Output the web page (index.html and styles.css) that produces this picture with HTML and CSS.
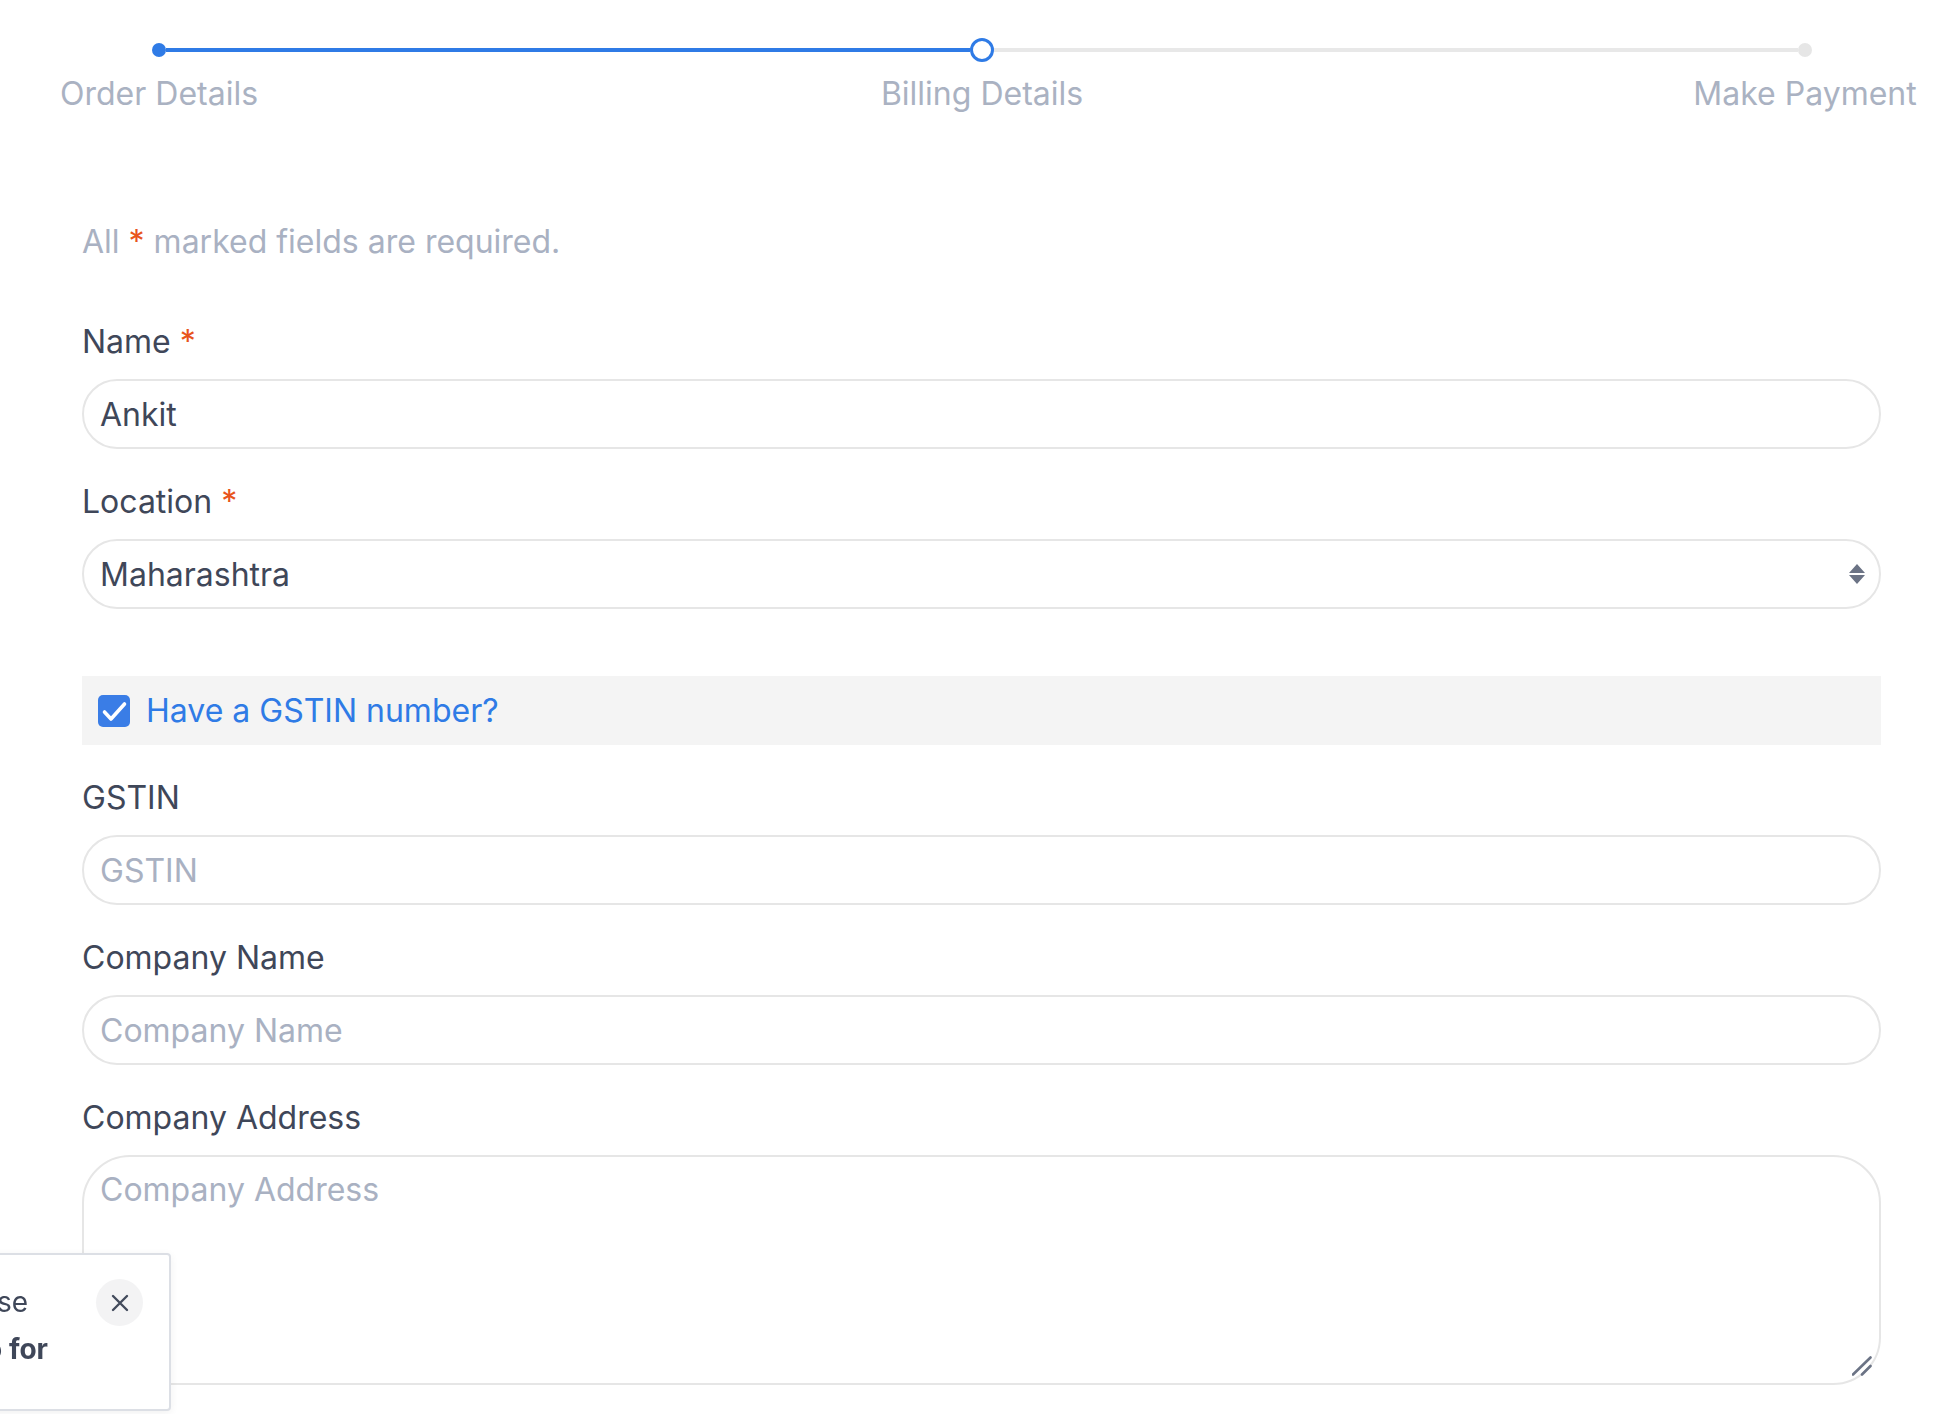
FILE: index.html
```html
<!DOCTYPE html>
<html lang="en">
<head>
  <meta charset="UTF-8" />
  <meta name="viewport" content="width=device-width, initial-scale=1.0"/>
  <title>Checkout – Billing Details</title>
  <link rel="stylesheet" href="styles.css">
</head>
<body>
  <div class="checkout">
    <!-- STEPPER -->
    <div class="stepper">
      <div class="track">
        <span class="dot dot-done"></span>
        <span class="bar bar-done"></span>
        <span class="ring"></span>
        <span class="bar"></span>
        <span class="dot"></span>
      </div>
      <div class="step-labels">
        <span class="step-label">Order Details</span>
        <span class="step-label">Billing Details</span>
        <span class="step-label">Make Payment</span>
      </div>
    </div>

    <!-- BILLING FORM -->
    <form class="billing" id="billingForm">
      <p class="note">All <span class="req">*</span> marked fields are required.</p>

      <div class="field">
        <label for="name">Name <span class="req">*</span></label>
        <input type="text" id="name" value="Ankit" />
      </div>

      <div class="field">
        <label for="location">Location <span class="req">*</span></label>
        <div class="select-wrap">
          <select id="location">
            <option>Maharashtra</option>
            <option>Karnataka</option>
            <option>Gujarat</option>
            <option>Delhi</option>
          </select>
          <svg class="select-arrow" width="16" height="20" viewBox="0 0 16 20">
            <path d="M8 0 L16 9 H0 Z M0 11 H16 L8 20 Z" fill="#6b7385"/>
          </svg>
        </div>
      </div>

      <label class="gst-toggle">
        <span class="check-box">
          <svg width="32" height="32" viewBox="0 0 32 32">
            <path d="M6.5 17 L13 24 L26.5 9" fill="none" stroke="#fff" stroke-width="3.6" stroke-linecap="round" stroke-linejoin="round"/>
          </svg>
        </span>
        Have a GSTIN number?
      </label>

      <div class="field">
        <label for="gstin">GSTIN</label>
        <input type="text" id="gstin" placeholder="GSTIN" />
      </div>

      <div class="field">
        <label for="companyName">Company Name</label>
        <input type="text" id="companyName" placeholder="Company Name" />
      </div>

      <div class="field">
        <label for="companyAddress">Company Address</label>
        <div class="textarea-wrap">
          <textarea id="companyAddress" placeholder="Company Address"></textarea>
          <svg class="grip" width="20" height="20" viewBox="0 0 20 20">
            <path d="M1 18.5 L18.5 1.5 M10 18.5 L18.5 10" stroke="#6b7385" stroke-width="2.6" stroke-linecap="round"/>
          </svg>
        </div>
      </div>
    </form>
  </div>

  <!-- TOAST -->
  <div class="toast">
    <p class="toast-text">
      <span class="toast-line">Sign in to use</span>
      <strong class="toast-line">Upgrade to Pro for</strong>
    </p>
    <button class="toast-close" type="button" aria-label="Close">
      <svg width="18" height="18" viewBox="0 0 18 18">
        <path d="M2 2 L16 16 M16 2 L2 16" stroke="#434b5c" stroke-width="2.4" stroke-linecap="round"/>
      </svg>
    </button>
  </div>
</body>
</html>
```

FILE: styles.css
```css
/* Reset & fonts */
* { margin:0; padding:0; box-sizing:border-box }
body { font-family:Inter,"Noto Sans",sans-serif; background:#fff; color:#3f4759; }

.checkout { padding:38px 63px 40px 82px; }

/* Stepper */
.stepper { margin-left:-82px; margin-right:-63px; }
.track {
  display:flex; align-items:center; height:24px;
  margin-left:152px; width:1660px;
}
.dot { width:14px; height:14px; border-radius:50%; background:#e6e6e6; flex:none; }
.dot-done { background:#2f7be6; }
.bar { flex:1; height:4px; background:#e8e8e8; }
.bar-done { background:#2f7be6; }
.ring {
  width:24px; height:24px; border-radius:50%; flex:none;
  border:3px solid #2f7be6; background:#fff;
}
.step-labels {
  display:flex; justify-content:space-between;
  margin:12px 0 0 159px; width:1646px;
}
.step-label {
  width:0; display:flex; justify-content:center; white-space:nowrap;
  font-size:32px; line-height:40px; color:#aab2c2;
}

/* Form */
.billing { margin-top:104px; }
.note { font-size:32px; line-height:48px; color:#a9b1c2; margin-bottom:52px; }
.req { color:#e8541c; }

.field { margin-bottom:29px; }
.field label { display:block; font-size:32px; line-height:48px; margin-bottom:13px; color:#3f4759; }
.field input,
.field select,
.field textarea {
  width:100%; height:70px; padding:0 16px;
  border:2px solid #e6e6e6; border-radius:48px;
  font-family:inherit; font-size:32px; color:#3f4759; background:#fff;
  outline:none;
}
.field input::placeholder,
.field textarea::placeholder { color:#a9b1c2; }

.select-wrap { position:relative; }
.field select { appearance:none; -webkit-appearance:none; }
.select-arrow { position:absolute; right:16px; top:25px; pointer-events:none; }

.textarea-wrap { position:relative; }
.field textarea {
  height:230px; padding:9px 16px; line-height:48px; resize:none; display:block;
}
.grip { position:absolute; right:9px; bottom:9px; }

/* GSTIN toggle */
.gst-toggle {
  display:flex; align-items:center; gap:16px;
  height:69px; margin:67px 0 29px; padding-left:16px;
  background:#f4f4f4; font-size:32px; color:#2f7be6; cursor:pointer;
}
.check-box {
  width:32px; height:32px; border-radius:5px; background:#3a7de6;
  display:flex; flex:none;
}

/* Toast */
.toast {
  position:fixed; left:-300px; top:1253px; width:471px; height:158px;
  display:flex; align-items:flex-start; gap:48px;
  padding:24px 26px 0 0;
  background:#fff; border:2px solid #dcdfe5; border-radius:4px;
  box-shadow:0 2px 8px rgba(0,0,0,0.06);
}
.toast-text {
  flex:1; min-width:0; text-align:right; font-size:28px; line-height:47px; color:#3f4759;
}
.toast-line { display:block; white-space:nowrap; }
.toast-text span { padding-right:20px; }
.toast-text strong { font-weight:700; }
.toast-close {
  width:47px; height:47px; border:none; border-radius:50%;
  background:#f3f3f4; display:flex; align-items:center; justify-content:center;
  cursor:pointer; flex:none;
}
```
